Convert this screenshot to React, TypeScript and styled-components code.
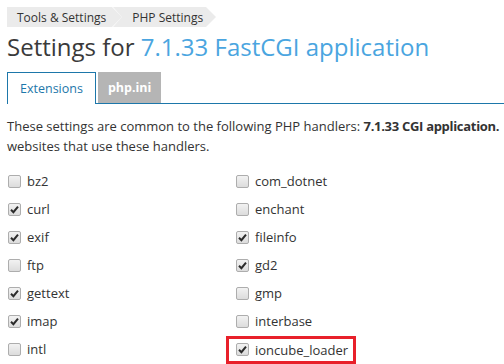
import React from 'react';
import styled, { createGlobalStyle } from 'styled-components';

const GlobalStyle = createGlobalStyle`
  html, body {
    margin: 0;
    padding: 0;
    background: #fff;
  }
  body {
    font-family: 'Open Sans', 'Liberation Sans', sans-serif;
    color: #333;
    overflow: hidden;
  }
`;

const Page = styled.div`
  width: 504px;
  height: 364px;
  padding: 7px 0 0 7px;
  box-sizing: border-box;
  overflow: hidden;
`;

const Crumbs = styled.div`
  display: flex;
  height: 20px;
`;

const Crumb = styled.div<{ $first?: boolean }>`
  position: relative;
  display: flex;
  align-items: center;
  height: 20px;
  background: #ebebeb;
  font-size: 12px;
  color: #333;
  padding: ${({ $first }) => ($first ? '0 6px 0 10px' : '0 3px 0 10px')};
  margin-right: 10px;

  &::after {
    content: '';
    position: absolute;
    right: -10px;
    top: 0;
    border-top: 10px solid transparent;
    border-bottom: 10px solid transparent;
    border-left: 10px solid #ebebeb;
  }

  &::before {
    content: '';
    display: ${({ $first }) => ($first ? 'none' : 'block')};
    position: absolute;
    left: -9px;
    top: 0;
    width: 0;
    height: 0;
    border-top: 10px solid #ebebeb;
    border-bottom: 10px solid #ebebeb;
    border-left: 9px solid transparent;
  }
`;

const Title = styled.h1`
  margin: 3px 0 0 0;
  font-size: 24px;
  font-weight: 400;
  line-height: 34px;
  color: #3a3a3a;
  white-space: nowrap;
`;

const Accent = styled.span`
  color: #4aa5e0;
`;

const Tabs = styled.div`
  display: flex;
  align-items: flex-end;
  gap: 2px;
  margin-top: 8px;
  border-bottom: 1px solid #1d77aa;
  height: 31px;
`;

const Tab = styled.div<{ $active?: boolean }>`
  display: flex;
  align-items: center;
  justify-content: center;
  box-sizing: border-box;
  font-size: 12.5px;
  height: ${({ $active }) => ($active ? '32px' : '31px')};
  margin-bottom: ${({ $active }) => ($active ? '-1px' : '0')};
  padding: 0 ${({ $active }) => ($active ? '12px' : '10px')};
  background: ${({ $active }) => ($active ? '#fff' : '#b5b5b5')};
  color: ${({ $active }) => ($active ? '#1d77aa' : '#fff')};
  font-weight: ${({ $active }) => ($active ? 400 : 700)};
  border: ${({ $active }) => ($active ? '1px solid #1d77aa' : 'none')};
  border-bottom: none;
`;

const Intro = styled.p`
  margin: 12px 0 0 0;
  font-size: 13px;
  line-height: 20px;
  white-space: nowrap;
`;

const Strong = styled.b`
  letter-spacing: -0.3px;
`;

const List = styled.div`
  display: grid;
  grid-template-columns: 228px 228px;
  grid-auto-rows: 28px;
  margin-top: 11px;
`;

const Item = styled.label<{ $marked?: boolean }>`
  display: flex;
  align-items: center;
  gap: 6px;
  font-size: 13px;
  color: #333;
  width: fit-content;
  padding-left: 1px;
  ${({ $marked }) =>
    $marked &&
    `
    outline: 3px solid #e8202a;
    outline-offset: 0;
    margin: 1px 0 0 -6px;
    padding: 0 5px 0 7px;
    height: 22px;
    align-self: center;
  `}
`;

const Box = styled.span`
  position: relative;
  display: inline-block;
  box-sizing: border-box;
  width: 13px;
  height: 13px;
  border: 1px solid #adadad;
  border-radius: 2px;
  background: linear-gradient(#f2f2f2, #dcdcdc);
  flex-shrink: 0;
`;

const Check = styled.svg`
  position: absolute;
  left: 1px;
  top: 1px;
`;

type Ext = { name: string; on: boolean; marked?: boolean };

const left: Ext[] = [
  { name: 'bz2', on: false },
  { name: 'curl', on: true },
  { name: 'exif', on: true },
  { name: 'ftp', on: false },
  { name: 'gettext', on: true },
  { name: 'imap', on: true },
  { name: 'intl', on: false },
];

const right: Ext[] = [
  { name: 'com_dotnet', on: false },
  { name: 'enchant', on: false },
  { name: 'fileinfo', on: true },
  { name: 'gd2', on: true },
  { name: 'gmp', on: false },
  { name: 'interbase', on: false },
  { name: 'ioncube_loader', on: true, marked: true },
];

const Extension: React.FC<{ ext: Ext }> = ({ ext }) => (
  <Item $marked={ext.marked}>
    <Box>
      {ext.on && (
        <Check width="9" height="9" viewBox="0 0 9 9">
          <path d="M1 4.8 L3.4 7.2 L8 1.6" fill="none" stroke="#2b2b2b" strokeWidth="2" />
        </Check>
      )}
    </Box>
    {ext.name}
  </Item>
);

const App: React.FC = () => {
  const rows = left.map((l, i) => [l, right[i]]).flat();

  return (
    <Page>
      <GlobalStyle />
      <Crumbs>
        <Crumb $first>Tools &amp; Settings</Crumb>
        <Crumb>PHP Settings</Crumb>
      </Crumbs>
      <Title>
        Settings for <Accent>7.1.33 FastCGI application</Accent>
      </Title>
      <Tabs>
        <Tab $active>Extensions</Tab>
        <Tab>php.ini</Tab>
      </Tabs>
      <Intro>
        These settings are common to the following PHP handlers: <Strong>7.1.33 CGI application.</Strong>
        <br />
        websites that use these handlers.
      </Intro>
      <List>
        {rows.map((ext) => (
          <Extension key={ext.name} ext={ext} />
        ))}
      </List>
    </Page>
  );
};

export default App;
